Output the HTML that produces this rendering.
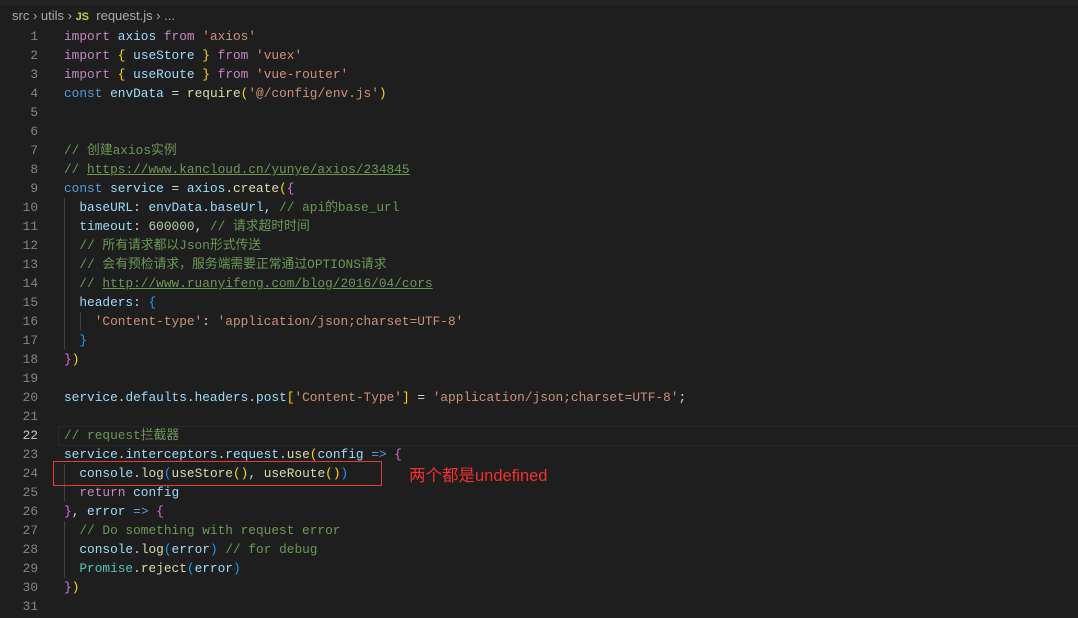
<!DOCTYPE html>
<html><head><meta charset="utf-8"><style>
body{margin:0;width:1078px;height:618px;background:#1e1e1e;overflow:hidden;position:relative;font-family:"Liberation Mono","Noto Sans CJK SC",monospace;}
.top{position:absolute;left:0;top:0;width:1078px;height:5px;background:#252526}
.bc{position:absolute;left:12px;top:8px;font:13px "Liberation Sans","Noto Sans CJK SC",sans-serif;color:#a9a9a9;white-space:pre}
.js{color:#cbcb41;font-weight:bold;font-size:11px}
.ln{position:absolute;left:0;width:38px;text-align:right;color:#858585;font-size:12.8px;line-height:19px}
.cd{position:absolute;left:64px;font-size:12.8px;line-height:19px;white-space:pre;color:#d4d4d4}
.k{color:#c586c0}.v{color:#9cdcfe}.s{color:#ce9178}.f{color:#dcdcaa}.b{color:#569cd6}.c{color:#6a9955}.n{color:#b5cea8}.t{color:#4ec9b0}
.y{color:#ffd700}.p{color:#da70d6}.bl{color:#179fff}.u{text-decoration:underline}
.g{position:absolute;width:1px;background:#404040}
</style></head><body>
<div class="top"></div>
<div class="bc">src › utils › <span class="js">JS</span>  request.js › ...</div>
<div style="position:absolute;left:58px;top:426px;width:1020px;height:18px;border:1px solid #282828;"></div>
<div class="g" style="left:64px;top:198px;height:152px"></div>
<div class="g" style="left:80px;top:312px;height:19px"></div>
<div class="g" style="left:64px;top:464px;height:38px"></div>
<div class="g" style="left:64px;top:521px;height:57px"></div>
<div id="L"></div>
<div style="position:absolute;left:53px;top:461px;width:327px;height:23px;border:1px solid #e53935"></div>
<div style="position:absolute;left:409px;top:462px;font:16.5px 'Liberation Sans','Noto Sans CJK SC',sans-serif;color:#f03030">两个都是undefined</div>
<script>
var lines=[
'<span class="k">import</span> <span class="v">axios</span> <span class="k">from</span> <span class="s">\'axios\'</span>',
'<span class="k">import</span> <span class="y">{</span> <span class="v">useStore</span> <span class="y">}</span> <span class="k">from</span> <span class="s">\'vuex\'</span>',
'<span class="k">import</span> <span class="y">{</span> <span class="v">useRoute</span> <span class="y">}</span> <span class="k">from</span> <span class="s">\'vue-router\'</span>',
'<span class="b">const</span> <span class="v">envData</span> = <span class="f">require</span><span class="y">(</span><span class="s">\'@/config/env.js\'</span><span class="y">)</span>',
'','','<span class="c">// 创建axios实例</span>',
'<span class="c">// <span class="u">https://www.kancloud.cn/yunye/axios/234845</span></span>',
'<span class="b">const</span> <span class="v">service</span> = <span class="v">axios</span>.<span class="f">create</span><span class="y">(</span><span class="p">{</span>',
'  <span class="v">baseURL</span>: <span class="v">envData</span>.<span class="v">baseUrl</span>, <span class="c">// api的base_url</span>',
'  <span class="v">timeout</span>: <span class="n">600000</span>, <span class="c">// 请求超时时间</span>',
'  <span class="c">// 所有请求都以Json形式传送</span>',
'  <span class="c">// 会有预检请求，服务端需要正常通过OPTIONS请求</span>',
'  <span class="c">// <span class="u">http://www.ruanyifeng.com/blog/2016/04/cors</span></span>',
'  <span class="v">headers</span>: <span class="bl">{</span>',
'    <span class="s">\'Content-type\'</span>: <span class="s">\'application/json;charset=UTF-8\'</span>',
'  <span class="bl">}</span>',
'<span class="p">}</span><span class="y">)</span>','',
'<span class="v">service</span>.<span class="v">defaults</span>.<span class="v">headers</span>.<span class="v">post</span><span class="y">[</span><span class="s">\'Content-Type\'</span><span class="y">]</span> = <span class="s">\'application/json;charset=UTF-8\'</span>;',
'','<span class="c">// request拦截器</span>',
'<span class="v">service</span>.<span class="v">interceptors</span>.<span class="v">request</span>.<span class="f">use</span><span class="y">(</span><span class="v">config</span> <span class="b">=&gt;</span> <span class="p">{</span>',
'  <span class="v">console</span>.<span class="f">log</span><span class="bl">(</span><span class="f">useStore</span><span class="y">()</span>, <span class="f">useRoute</span><span class="y">()</span><span class="bl">)</span>',
'  <span class="k">return</span> <span class="v">config</span>',
'<span class="p">}</span>, <span class="v">error</span> <span class="b">=&gt;</span> <span class="p">{</span>',
'  <span class="c">// Do something with request error</span>',
'  <span class="v">console</span>.<span class="f">log</span><span class="bl">(</span><span class="v">error</span><span class="bl">)</span> <span class="c">// for debug</span>',
'  <span class="t">Promise</span>.<span class="f">reject</span><span class="bl">(</span><span class="v">error</span><span class="bl">)</span>',
'<span class="p">}</span><span class="y">)</span>',''];
var h='';
for(var i=0;i<31;i++){var t=27+19*i;
h+='<div class="ln" style="top:'+t+'px;'+(i==21?'color:#c6c6c6':'')+'">'+(i+1)+'</div>';
h+='<div class="cd" style="top:'+t+'px">'+lines[i]+'</div>';}
document.getElementById('L').innerHTML=h;
</script>
</body></html>
